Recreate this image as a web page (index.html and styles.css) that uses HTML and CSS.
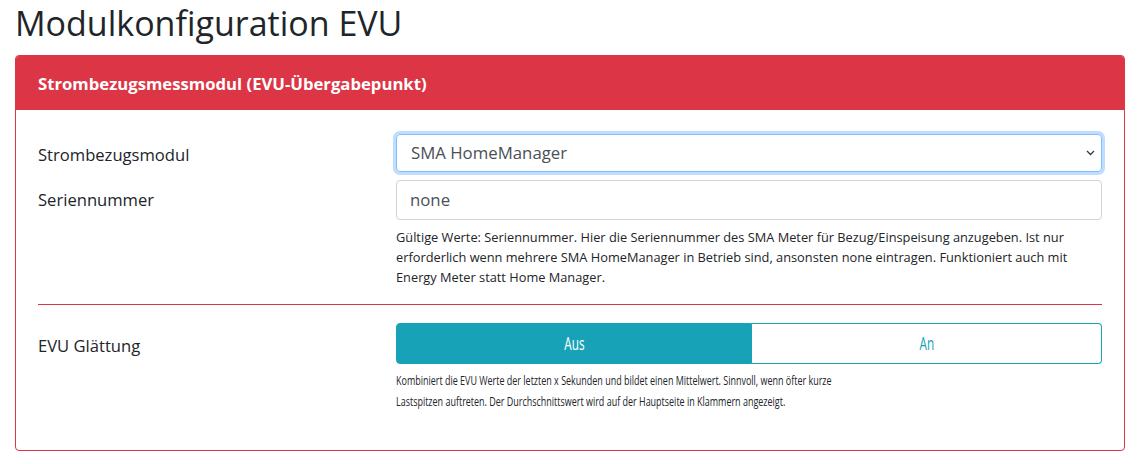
FILE: index.html
```html
<!DOCTYPE html>
<html lang="de">
<head>
<meta charset="utf-8">
<title>Modulkonfiguration EVU</title>
<link rel="stylesheet" href="styles.css">
</head>
<body>
<div class="container">
  <h1 class="title">Modulkonfiguration EVU</h1>
  <div class="card">
    <div class="card-header">Strombezugsmessmodul (EVU-Übergabepunkt)</div>
    <div class="card-body">
      <div class="form-row row-select">
        <label class="col-label">Strombezugsmodul</label>
        <div class="col-field">
          <div class="select">
            <span>SMA HomeManager</span>
            <svg class="chevron" width="9" height="6" viewBox="0 0 9 6"><path d="M1 1 L4.5 4.5 L8 1" fill="none" stroke="#343a40" stroke-width="1.3"/></svg>
          </div>
        </div>
      </div>
      <div class="form-row row-input">
        <label class="col-label">Seriennummer</label>
        <div class="col-field">
          <div class="input">none</div>
          <p class="help">Gültige Werte: Seriennummer. Hier die Seriennummer des SMA Meter für Bezug/Einspeisung anzugeben. Ist nur erforderlich wenn mehrere SMA HomeManager in Betrieb sind, ansonsten none eintragen. Funktioniert auch mit Energy Meter statt Home Manager.</p>
        </div>
      </div>
      <hr class="divider">
      <div class="form-row row-toggle">
        <label class="col-label">EVU Glättung</label>
        <div class="col-field">
          <div class="btn-group">
            <div class="btn btn-active"><span class="btn-text">Aus</span></div>
            <div class="btn btn-outline"><span class="btn-text">An</span></div>
          </div>
          <p class="help help-narrow">Kombiniert die EVU Werte der letzten x Sekunden und bildet einen Mittelwert. Sinnvoll, wenn öfter kurze<br>Lastspitzen auftreten. Der Durchschnittswert wird auf der Hauptseite in Klammern angezeigt.</p>
        </div>
      </div>
    </div>
  </div>
</div>
</body>
</html>
```

FILE: styles.css
```css
* { box-sizing: border-box; }
html, body {
  margin: 0;
  padding: 0;
  background: #fff;
  color: #212529;
  font-family: "Open Sans", "Noto Sans", "Liberation Sans", sans-serif;
  font-size: 16px;
  line-height: 1.5;
}
.container {
  padding: 0 12px 0 15px;
}
.title {
  margin: 0 0 11px 0;
  padding-top: 2px;
  font-size: 34px;
  font-weight: 400;
  line-height: 42px;
  color: #212529;
}
.card {
  border: 1px solid #dc3545;
  border-radius: 4px;
  overflow: hidden;
}
.card-header {
  background: #dc3545;
  color: #fff;
  font-weight: 700;
  font-size: 16.7px;
  line-height: 24px;
  padding: 16px 22px 14px;
}
.card-body {
  padding: 24px 22px 38px 22px;
}
.form-row {
  display: flex;
  margin: 0 -5px;
}
.col-label {
  flex: 0 0 33.3333%;
  padding: 0 5px;
  font-size: 16.6px;
}
.col-field {
  flex: 0 0 66.6667%;
  padding: 0 5px;
  min-width: 0;
}
.row-select { margin-bottom: 6px; }
.row-select .col-label { line-height: 38px; padding-top: 2px; }
.row-input .col-label { line-height: 40px; }
.select {
  height: 38px;
  border: 1px solid #80bdff;
  border-radius: 4px;
  box-shadow: 0 0 0 3px rgba(0, 123, 255, 0.25);
  display: flex;
  align-items: center;
  justify-content: space-between;
  padding: 0 6px 0 14px;
  font-size: 16.8px;
  color: #495057;
}
.chevron { display: block; }
.input {
  height: 40px;
  border: 1px solid #ced4da;
  border-radius: 4px;
  padding: 0 13px;
  line-height: 38px;
  font-size: 16.8px;
  color: #495057;
}
.help {
  margin: 7px 0 0 0;
  font-size: 12.8px;
  line-height: 20px;
  color: #212529;
}
.divider {
  margin: 17px 0 18px 0;
  border: 0;
  border-top: 1px solid #dc3545;
  height: 0;
}
.row-toggle .col-label { line-height: 41px; padding-top: 2px; }
.btn-group {
  display: flex;
  height: 41px;
}
.btn {
  display: flex;
  align-items: center;
  justify-content: center;
  font-size: 19px;
}
.btn-text {
  display: inline-block;
  transform: scaleX(0.62);
}
.btn-active {
  flex: 0 0 356px;
  background: #17a2b8;
  color: #fff;
  border: 1px solid #17a2b8;
  border-radius: 4px 0 0 4px;
}
.btn-outline {
  flex: 1 1 auto;
  color: #17a2b8;
  border: 1px solid #17a2b8;
  border-left: 0;
  border-radius: 0 4px 4px 0;
}
.help-narrow {
  margin-top: 6px;
  line-height: 21px;
  font-size: 13px;
  white-space: nowrap;
  transform: scaleX(0.69);
  transform-origin: left top;
}
```
